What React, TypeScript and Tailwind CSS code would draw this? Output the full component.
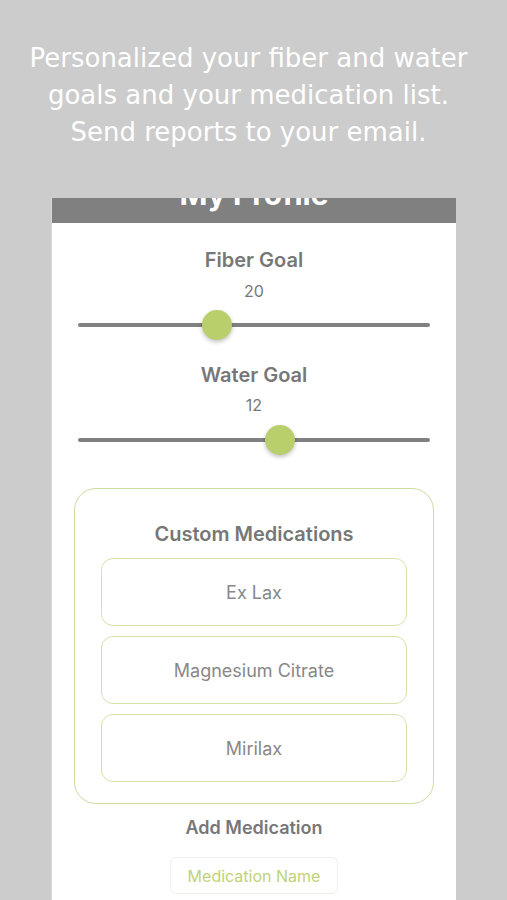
import React from "react";

const sys = { fontFamily: "Inter, Roboto, 'Noto Sans', sans-serif" };

function Slider({ pct }: { pct: number }) {
  return (
    <div className="relative mx-[26px] h-[30px] flex items-center">
      <div className="h-[4px] w-full rounded-full bg-[#808080]" />
      <div
        className="absolute top-0 h-[30px] w-[30px] -ml-[15px] rounded-full bg-[#b9cf6c] shadow-[0_2px_4px_rgba(0,0,0,0.25)]"
        style={{ left: `${pct}%` }}
      />
    </div>
  );
}

export default function App() {
  const meds = ["Ex Lax", "Magnesium Citrate", "Mirilax"];
  return (
    <div className="w-[507px] h-[900px] overflow-hidden bg-[#cccccc] flex flex-col items-center">
      <div
        className="pt-[40px] pr-[10px] text-center text-white text-[26px] leading-[37px] whitespace-nowrap"
        style={{ fontFamily: "'DejaVu Sans', 'Liberation Sans', sans-serif" }}
      >
        <div>Personalized your fiber and water</div>
        <div>goals and your medication list.</div>
        <div>Send reports to your email.</div>
      </div>
      <div className="mt-[47px] w-[405px] flex-1 bg-white flex flex-col border-l border-[#d8d8d8]" style={sys}>
        <div className="h-[25px] bg-[#808080] overflow-hidden flex justify-center">
          <div className="-mt-[22px] text-white text-[30px] font-bold leading-[36px]">My Profile</div>
        </div>
        <div className="pt-[24px] text-center text-[#777777] text-[20px] font-semibold leading-[26px]">Fiber Goal</div>
        <div className="mt-[8px] text-center text-[#777777] text-[16px] leading-[20px]">20</div>
        <div className="mt-[9px]">
          <Slider pct={39.5} />
        </div>
        <div className="mt-[22px] text-center text-[#777777] text-[20px] font-semibold leading-[26px]">Water Goal</div>
        <div className="mt-[7px] text-center text-[#777777] text-[16px] leading-[20px]">12</div>
        <div className="mt-[10px]">
          <Slider pct={57.3} />
        </div>
        <div className="mt-[33px] mx-[22px] rounded-[22px] border-[1.5px] border-[#cddc9f] px-[26px] pt-[32px] pb-[21px] flex flex-col">
          <div className="text-center text-[#777777] text-[20px] font-semibold leading-[26px]">Custom Medications</div>
          <div className="mt-[11px] flex flex-col gap-[10px]">
            {meds.map((m) => (
              <div
                key={m}
                className="h-[68px] rounded-[12px] border-[1.5px] border-[#d5e2aa] flex items-center justify-center text-[#888888] text-[18px]"
              >
                {m}
              </div>
            ))}
          </div>
        </div>
        <div className="mt-[12px] text-center text-[#777777] text-[18px] font-semibold leading-[24px]">Add Medication</div>
        <div className="mt-[17px] flex justify-center">
          <div className="w-[168px] h-[37px] rounded-[6px] border border-[#eef0ea] flex items-center justify-center text-[#bfd17a] text-[16px]">
            Medication Name
          </div>
        </div>
      </div>
    </div>
  );
}
